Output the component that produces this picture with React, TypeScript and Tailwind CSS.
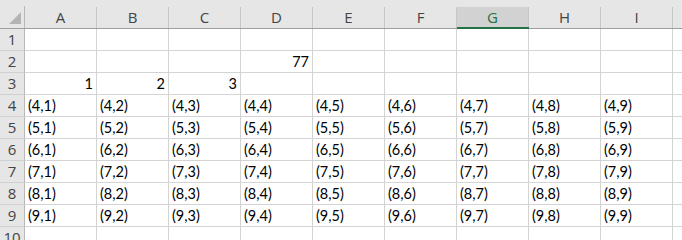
import React from 'react';

const cols = ['A', 'B', 'C', 'D', 'E', 'F', 'G', 'H', 'I'];
const selectedCol = 'G';

type Cell = { v: string; right?: boolean };

// builds the cell values for one row
function rowData(r: number): Cell[] {
  if (r === 2) return cols.map((c) => ({ v: c === 'D' ? '77' : '', right: true }));
  if (r === 3) return cols.map((_, i) => ({ v: i < 3 ? String(i + 1) : '', right: true }));
  if (r >= 4 && r <= 9) return cols.map((_, i) => ({ v: `(${r},${i + 1})` }));
  return cols.map(() => ({ v: '' }));
}

export default function App() {
  const rows = [1, 2, 3, 4, 5, 6, 7, 8, 9, 10];

  return (
    <div className="w-[682px] h-[240px] overflow-hidden bg-white">
      {/* Column headers */}
      <div className="flex bg-[#e6e6e6] h-[29px] font-['Open_Sans',sans-serif] text-[15px] text-[#444]">
        <div className="w-[25px] shrink-0 border-b border-[#9e9e9e] pt-[6px] flex">
          <div className="flex-1 border-r border-[#b8b8b8] flex items-end justify-end pr-[3px] pb-[4px]">
            <svg width="12" height="12" viewBox="0 0 12 12">
              <polygon points="12,0 12,12 0,12" fill="#b4b4b4" />
            </svg>
          </div>
        </div>
        {cols.map((c) => (
          <div
            key={c}
            className={`w-[72px] shrink-0 flex pt-[7px] ${
              c === selectedCol ? 'border-b-2 border-[#217346]' : 'border-b border-[#9e9e9e]'
            }`}
          >
            <div
              className={`flex-1 border-r border-[#c6c6c6] flex items-center justify-center ${
                c === selectedCol ? 'bg-[#d2d2d2] text-[#217346]' : ''
              }`}
            >
              {c}
            </div>
          </div>
        ))}
        <div className="flex-1 border-b border-[#9e9e9e]" />
      </div>

      {/* Rows */}
      {rows.map((r) => (
        <div key={r} className="flex h-[22px]">
          <div className="w-[25px] shrink-0 bg-[#e6e6e6] border-r border-b border-r-[#b8b8b8] border-b-[#d0d0d0] flex items-center justify-center font-['Open_Sans',sans-serif] text-[15px] text-[#444]">
            {r}
          </div>
          {rowData(r).map((cell, i) => (
            <div
              key={i}
              className={`w-[72px] shrink-0 border-r border-b border-[#d4d4d4] flex items-end pb-[1px] px-[3px] font-['Lato',sans-serif] text-[14.5px] leading-[18px] text-black ${
                cell.right ? 'justify-end' : 'justify-start'
              }`}
            >
              {cell.v}
            </div>
          ))}
          <div className="flex-1 border-b border-[#d4d4d4]" />
        </div>
      ))}
    </div>
  );
}
